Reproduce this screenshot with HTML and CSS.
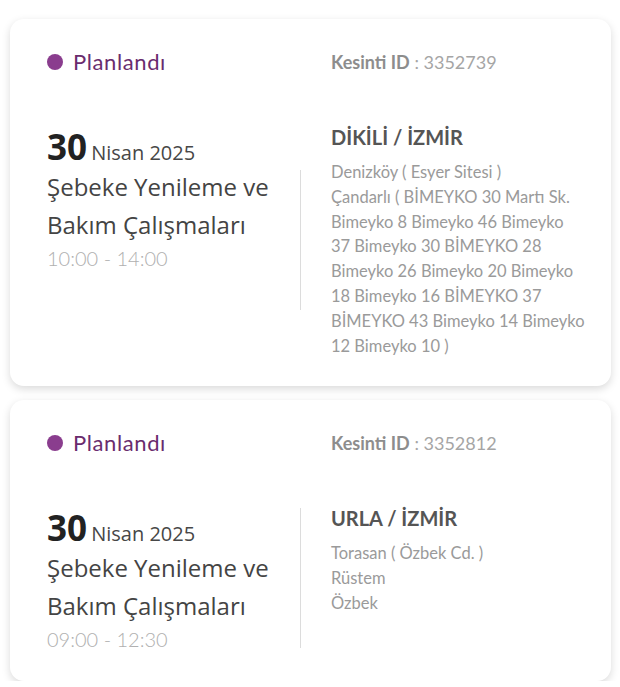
FILE: index.html
```html
<!DOCTYPE html>
<html lang="tr">
<head>
<meta charset="utf-8">
<title>Kesintiler</title>
<link rel="stylesheet" href="styles.css">
</head>
<body>
<div class="list">
  <div class="card">
    <div class="row head">
      <div class="status"><span class="dot"></span><span class="status-text">Planlandı</span></div>
      <div></div>
      <div class="kid"><b>Kesinti ID</b> : 3352739</div>
    </div>
    <div class="row body">
      <div class="left">
        <div class="date"><span class="day">30</span> <span class="month">Nisan 2025</span></div>
        <div class="title">Şebeke Yenileme ve Bakım Çalışmaları</div>
        <div class="time">10:00 - 14:00</div>
      </div>
      <div class="divider"></div>
      <div class="right">
        <div class="place">DİKİLİ / İZMİR</div>
        <div class="addr">Denizköy ( Esyer Sitesi )</div>
        <div class="addr">Çandarlı ( BİMEYKO 30 Martı Sk.<br>Bimeyko 8 Bimeyko 46 Bimeyko<br>37 Bimeyko 30 BİMEYKO 28<br>Bimeyko 26 Bimeyko 20 Bimeyko<br>18 Bimeyko 16 BİMEYKO 37<br>BİMEYKO 43 Bimeyko 14 Bimeyko<br>12 Bimeyko 10 )</div>
      </div>
    </div>
  </div>
  <div class="card">
    <div class="row head">
      <div class="status"><span class="dot"></span><span class="status-text">Planlandı</span></div>
      <div></div>
      <div class="kid"><b>Kesinti ID</b> : 3352812</div>
    </div>
    <div class="row body">
      <div class="left">
        <div class="date"><span class="day">30</span> <span class="month">Nisan 2025</span></div>
        <div class="title">Şebeke Yenileme ve Bakım Çalışmaları</div>
        <div class="time">09:00 - 12:30</div>
      </div>
      <div class="divider"></div>
      <div class="right">
        <div class="place">URLA / İZMİR</div>
        <div class="addr">Torasan ( Özbek Cd. )</div>
        <div class="addr">Rüstem</div>
        <div class="addr">Özbek</div>
      </div>
    </div>
  </div>
</div>
</body>
</html>
```
FILE: styles.css
```css
html, body {
  margin: 0;
  padding: 0;
  background: #ffffff;
}
.list {
  display: flex;
  flex-direction: column;
  gap: 14px;
  padding: 19px 9px 0 10px;
}
.card {
  background: #fff;
  border-radius: 14px;
  box-shadow: 0 3px 9px rgba(0, 0, 0, 0.15);
  padding: 31px 20px 28px 37px;
}
.row {
  display: grid;
  grid-template-columns: 253px 1px 1fr;
}
.head {
  align-items: center;
  height: 24px;
}
.status {
  display: flex;
  align-items: center;
  gap: 10px;
}
.dot {
  width: 16px;
  height: 16px;
  border-radius: 50%;
  background: #8a3d8e;
}
.status-text {
  font-family: "Lato", sans-serif;
  font-size: 22px;
  letter-spacing: 0.6px;
  color: #6a2c6e;
  line-height: 24px;
}
.kid {
  padding-left: 30px;
  font-family: "Lato", sans-serif;
  font-size: 18px;
  color: #a5a5a5;
}
.kid b {
  font-weight: 700;
  color: #8d8d8d;
}
.body {
  margin-top: 48px;
  align-items: start;
}
.left {
  font-family: "Open Sans", sans-serif;
  padding-top: 4px;
}
.date {
  height: 42px;
  line-height: 42px;
  color: #333;
}
.day {
  font-size: 35px;
  font-weight: 700;
  color: #222;
}
.month {
  font-size: 20px;
  color: #474747;
}
.title {
  font-size: 24px;
  line-height: 38px;
  color: #444;
  padding-right: 10px;
}
.time {
  font-family: "Lato", sans-serif;
  font-size: 20px;
  font-weight: 300;
  line-height: 28px;
  color: #b0b0b0;
}
.divider {
  align-self: center;
  height: 140px;
  background: #dcdcdc;
}
.right {
  padding-left: 30px;
  font-family: "Lato", sans-serif;
}
.place {
  font-size: 20px;
  font-weight: 700;
  color: #555;
  line-height: 30px;
  margin-bottom: 8px;
}
.addr {
  font-size: 16.5px;
  line-height: 24.8px;
  color: #9a9a9a;
  white-space: nowrap;
}
```
